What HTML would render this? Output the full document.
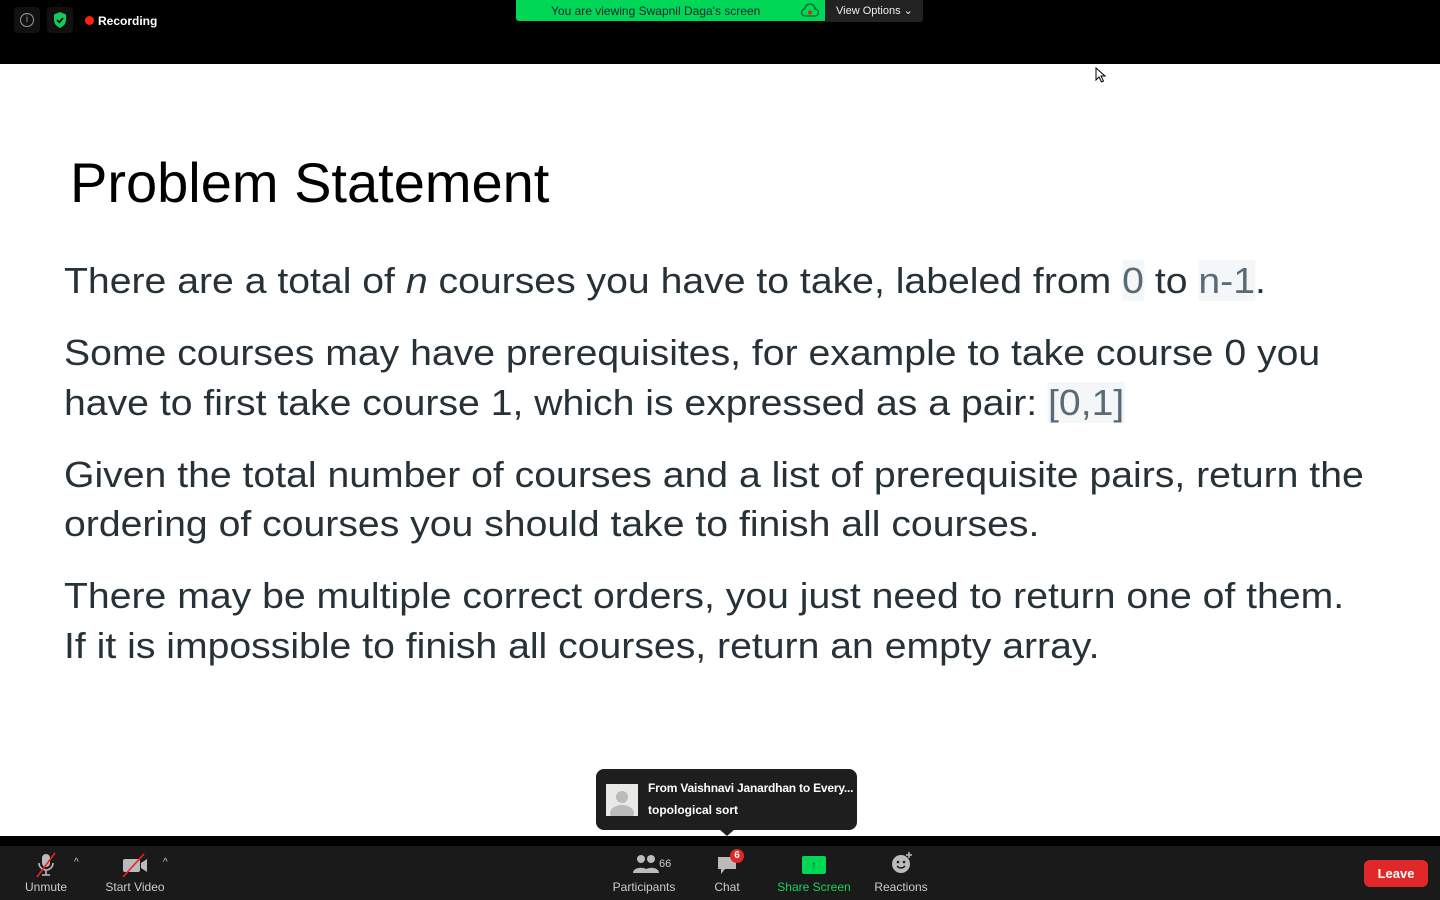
<!DOCTYPE html>
<html><head><meta charset="utf-8"><style>
*{margin:0;padding:0;box-sizing:border-box}
body{width:1440px;height:900px;background:#000;position:relative;overflow:hidden;font-family:"Liberation Sans",sans-serif}
.slide{position:absolute;left:0;top:64px;width:1440px;height:772px;background:#fff}
.t{position:absolute;white-space:nowrap;color:#263238;font-size:36px;left:64px;line-height:40px;transform:scaleX(1.088);transform-origin:0 0}
.c{color:#5a6b78;background:#f4f6f8}
.bar{position:absolute;left:0;top:846px;width:1440px;height:54px;background:#1a1a1a}
.lbl{position:absolute;top:880px;font-size:12px;color:#ccc;transform:translateX(-50%);white-space:nowrap}
</style></head><body>
<div style="position:absolute;left:14px;top:7px;width:26px;height:26px;background:#111;border-radius:4px"></div>
<div style="position:absolute;left:20px;top:13px;width:14px;height:14px;border:1px solid #999;border-radius:50%;color:#999;font-size:10px;text-align:center;line-height:12px">i</div>
<div style="position:absolute;left:47px;top:7px;width:26px;height:26px;background:#111;border-radius:4px"></div>
<svg style="position:absolute;left:53px;top:12px" width="14" height="16" viewBox="0 0 14 16"><path d="M7 0L13 2.5V8C13 12 10 14.5 7 16C4 14.5 1 12 1 8V2.5Z" fill="#17c95a"/><path d="M4 8L6.3 10.3L10 6" stroke="#000" stroke-width="1.6" fill="none"/></svg>
<div style="position:absolute;left:85px;top:16px;width:9px;height:9px;background:#f21;border-radius:50%"></div>
<div style="position:absolute;left:98px;top:14px;font-size:12px;color:#fff;font-weight:bold">Recording</div>
<div style="position:absolute;left:516px;top:0;width:309px;height:21px;background:#00d756;border-radius:0 0 0 3px;font-size:12px;color:#123;line-height:22px;padding-left:35px">You are viewing Swapnil Daga's screen</div>
<svg style="position:absolute;left:801px;top:3px" width="18" height="15" viewBox="0 0 18 15"><path d="M4 13H14A3.5 3.5 0 0 0 14 6A5 5 0 0 0 4 6A3.5 3.5 0 0 0 4 13Z" fill="none" stroke="#063" stroke-width="1.3"/><circle cx="9" cy="9.5" r="2" fill="#d22"/></svg>
<div style="position:absolute;left:825px;top:0;width:98px;height:22px;background:#222;border-radius:0 0 3px 0;font-size:11px;color:#eee;line-height:23px;padding-left:11px">View Options &#8964;</div>
<div class="slide"></div>
<div style="position:absolute;left:70px;top:150px;font-size:56px;color:#000;white-space:nowrap">Problem Statement</div>
<div class="t" style="top:261px">There are a total of <i>n</i> courses you have to take, labeled from <span class="c">0</span> to <span class="c">n-1</span>.</div>
<div class="t" style="top:333px">Some courses may have prerequisites, for example to take course 0 you</div>
<div class="t" style="top:383px">have to first take course 1, which is expressed as a pair: <span class="c">[0,1]</span></div>
<div class="t" style="top:455px">Given the total number of courses and a list of prerequisite pairs, return the</div>
<div class="t" style="top:504px">ordering of courses you should take to finish all courses.</div>
<div class="t" style="top:576px">There may be multiple correct orders, you just need to return one of them.</div>
<div class="t" style="top:626px">If it is impossible to finish all courses, return an empty array.</div>
<svg style="position:absolute;left:1095px;top:67px" width="12" height="16" viewBox="0 0 12 16"><path d="M1 1V13L4 10L6.5 15L8.5 14L6 9H10Z" fill="#fff" stroke="#000"/></svg>
<div style="position:absolute;left:596px;top:769px;width:261px;height:61px;background:#1e1e1e;border-radius:8px"></div>
<div style="position:absolute;left:719px;top:829px;width:0;height:0;border-left:8px solid transparent;border-right:8px solid transparent;border-top:7px solid #1e1e1e"></div>
<div style="position:absolute;left:606px;top:784px;width:32px;height:32px;background:#e8e8e6;overflow:hidden"><div style="position:absolute;left:10px;top:7px;width:12px;height:12px;border-radius:50%;background:#bbb"></div><div style="position:absolute;left:4px;top:21px;width:24px;height:16px;border-radius:50%;background:#bbb"></div></div>
<div style="position:absolute;left:648px;top:781px;font-size:12px;color:#fff;font-weight:bold;letter-spacing:-0.2px">From Vaishnavi Janardhan to Every...</div>
<div style="position:absolute;left:648px;top:803px;font-size:12px;color:#fff;font-weight:bold">topological sort</div>
<div class="bar"></div>
<svg style="position:absolute;left:34px;top:852px" width="24" height="26" viewBox="0 0 24 26"><rect x="8" y="2" width="8" height="13" rx="4" fill="#bbb"/><path d="M5 11A7 7 0 0 0 19 11M12 18V23M8 23H16" stroke="#bbb" stroke-width="1.6" fill="none"/><path d="M3 25L21 1" stroke="#e22" stroke-width="1.6"/></svg>
<div style="position:absolute;left:74px;top:857px;font-size:10px;color:#ccc">^</div>
<svg style="position:absolute;left:120px;top:852px" width="30" height="26" viewBox="0 0 30 26"><rect x="3" y="7" width="17" height="13" rx="2" fill="#bbb"/><path d="M21 11L27 7V20L21 16Z" fill="#bbb"/><path d="M3 25L24 2" stroke="#e22" stroke-width="1.6"/></svg>
<div style="position:absolute;left:163px;top:857px;font-size:10px;color:#ccc">^</div>
<div class="lbl" style="left:46px">Unmute</div>
<div class="lbl" style="left:135px">Start Video</div>
<svg style="position:absolute;left:632px;top:854px" width="28" height="20" viewBox="0 0 28 20"><circle cx="9" cy="5" r="4" fill="#bbb"/><path d="M1 19C1 12 17 12 17 19Z" fill="#bbb"/><circle cx="19" cy="5" r="4" fill="#bbb"/><path d="M12 19C12 12 27 12 27 19Z" fill="#bbb"/></svg>
<div style="position:absolute;left:659px;top:858px;font-size:11px;color:#ccc">66</div>
<div class="lbl" style="left:644px">Participants</div>
<svg style="position:absolute;left:716px;top:855px" width="22" height="22" viewBox="0 0 22 22"><path d="M2 2H20V14H9L5 19V14H2Z" fill="#bbb"/></svg>
<div style="position:absolute;left:730px;top:849px;width:14px;height:14px;border-radius:50%;background:#e02828;color:#fff;font-size:10px;font-weight:bold;text-align:center;line-height:14px">6</div>
<div class="lbl" style="left:727px">Chat</div>
<div style="position:absolute;left:802px;top:856px;width:24px;height:18px;background:#00d756;border-radius:2px;color:#063;font-size:12px;text-align:center;line-height:18px;font-weight:bold">&#8593;</div>
<div class="lbl" style="left:814px;color:#16d35d">Share Screen</div>
<svg style="position:absolute;left:890px;top:851px" width="24" height="24" viewBox="0 0 24 24"><circle cx="11" cy="13" r="9" fill="#bbb"/><circle cx="8" cy="11" r="1.3" fill="#1a1a1a"/><circle cx="14" cy="11" r="1.3" fill="#1a1a1a"/><path d="M7 15Q11 19 15 15" stroke="#1a1a1a" stroke-width="1.5" fill="none"/><path d="M19 1V7M16 4H22" stroke="#bbb" stroke-width="1.5"/></svg>
<div class="lbl" style="left:901px">Reactions</div>
<div style="position:absolute;left:1364px;top:860px;width:64px;height:27px;background:#e02828;border-radius:6px;color:#fff;font-size:13px;font-weight:bold;text-align:center;line-height:27px">Leave</div>
</body></html>
